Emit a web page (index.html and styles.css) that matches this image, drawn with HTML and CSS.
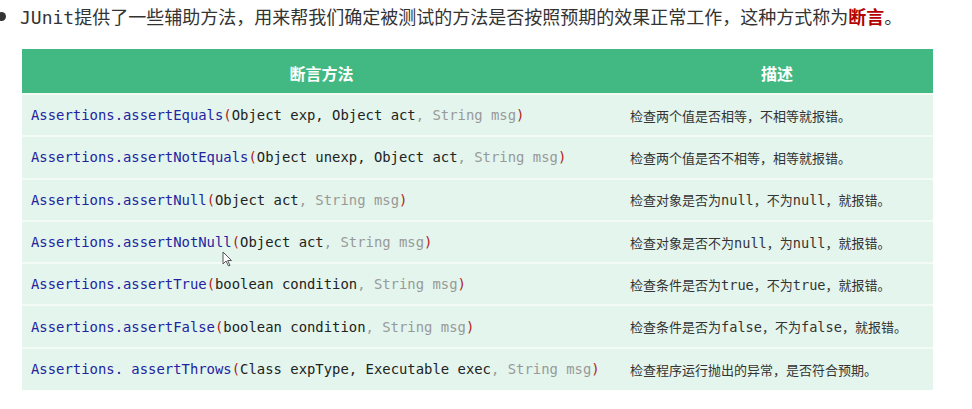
FILE: index.html
```html
<!DOCTYPE html>
<html lang="zh">
<head>
<meta charset="utf-8">
<link rel="stylesheet" href="styles.css">
</head>
<body>
<ul class="intro">
  <li>JUnit提供了一些辅助方法，用来帮我们确定被测试的方法是否按照预期的效果正常工作，这种方式称为<strong class="hl">断言</strong>。</li>
</ul>
<div class="wrap">
<table class="api">
  <thead>
    <tr><th class="c1">断言方法</th><th class="c2">描述</th></tr>
  </thead>
  <tbody>
    <tr><td class="code"><span class="fn">Assertions.assertEquals</span><span class="p">(</span>Object exp, Object act<span class="opt">, String msg</span><span class="p">)</span></td><td class="desc">检查两个值是否相等，不相等就报错。</td></tr>
    <tr><td class="code"><span class="fn">Assertions.assertNotEquals</span><span class="p">(</span>Object unexp, Object act<span class="opt">, String msg</span><span class="p">)</span></td><td class="desc">检查两个值是否不相等，相等就报错。</td></tr>
    <tr><td class="code"><span class="fn">Assertions.assertNull</span><span class="p">(</span>Object act<span class="opt">, String msg</span><span class="p">)</span></td><td class="desc">检查对象是否为<span class="m">null</span>，不为<span class="m">null</span>，就报错。</td></tr>
    <tr><td class="code"><span class="fn">Assertions.assertNotNull</span><span class="p">(</span>Object act<span class="opt">, String msg</span><span class="p">)</span></td><td class="desc">检查对象是否不为<span class="m">null</span>，为<span class="m">null</span>，就报错。</td></tr>
    <tr><td class="code"><span class="fn">Assertions.assertTrue</span><span class="p">(</span>boolean condition<span class="opt">, String msg</span><span class="p">)</span></td><td class="desc">检查条件是否为<span class="m">true</span>，不为<span class="m">true</span>，就报错。</td></tr>
    <tr><td class="code"><span class="fn">Assertions.assertFalse</span><span class="p">(</span>boolean condition<span class="opt">, String msg</span><span class="p">)</span></td><td class="desc">检查条件是否为<span class="m">false</span>，不为<span class="m">false</span>，就报错。</td></tr>
    <tr><td class="code"><span class="fn">Assertions. assertThrows</span><span class="p">(</span>Class expType, Executable exec<span class="opt">, String msg</span><span class="p">)</span></td><td class="desc">检查程序运行抛出的异常，是否符合预期。</td></tr>
  </tbody>
</table>
<svg class="cursor" width="11" height="16" viewBox="0 0 11 16"><path d="M1 1 L1 13 L4 10 L6.5 15 L8 14.3 L5.6 9.5 L9.5 9.5 Z" fill="#fff" stroke="#555" stroke-width="1"/></svg>
</div>
</body>
</html>
```
FILE: styles.css
```css
html, body {
  margin: 0;
  padding: 0;
  background: #fff;
}
body {
  font-family: "DejaVu Sans Mono", "Noto Sans CJK SC", monospace;
  color: #333;
}
.intro {
  margin: 0;
  padding: 3px 0 0 20px;
  list-style: none;
  font-size: 18px;
  line-height: 26px;
}
.intro li {
  position: relative;
}
.intro li::before {
  content: "";
  position: absolute;
  left: -23px;
  top: 9px;
  width: 9px;
  height: 9px;
  border-radius: 50%;
  background: #333;
}
.hl {
  color: #b30000;
  font-family: "Noto Sans CJK SC", sans-serif;
  font-weight: 700;
}
.wrap {
  position: relative;
  margin: 18px 0 0 22px;
  width: 911px;
}
.api {
  width: 911px;
  border-collapse: collapse;
  table-layout: fixed;
}
.api th {
  background: #42b983;
  color: #fff;
  font-family: "Noto Sans CJK SC", sans-serif;
  font-weight: 700;
  font-size: 16px;
  height: 45px;
  padding: 3px 0 0 0;
  box-sizing: border-box;
  text-align: center;
}
.api th.c1 { width: 599px; }
.api th.c2 { width: 312px; }
.api td {
  background: #e3f5ed;
  height: 42.3px;
  box-sizing: border-box;
  border-top: 2px solid #f3fbf7;
  padding: 0 0 0 9px;
  white-space: nowrap;
  vertical-align: middle;
}
.code {
  font-family: "DejaVu Sans Mono", monospace;
  font-size: 13.9px;
  color: #222;
}
.fn { color: #2323a0; }
.p { color: #b01c1c; }
.opt { color: #999; }
.desc {
  font-family: "Noto Sans CJK SC", sans-serif;
  font-size: 13px;
  color: #333;
}
.m {
  font-family: "DejaVu Sans Mono", monospace;
  font-size: 13.6px;
}
.cursor {
  position: absolute;
  left: 200px;
  top: 202px;
}
```
